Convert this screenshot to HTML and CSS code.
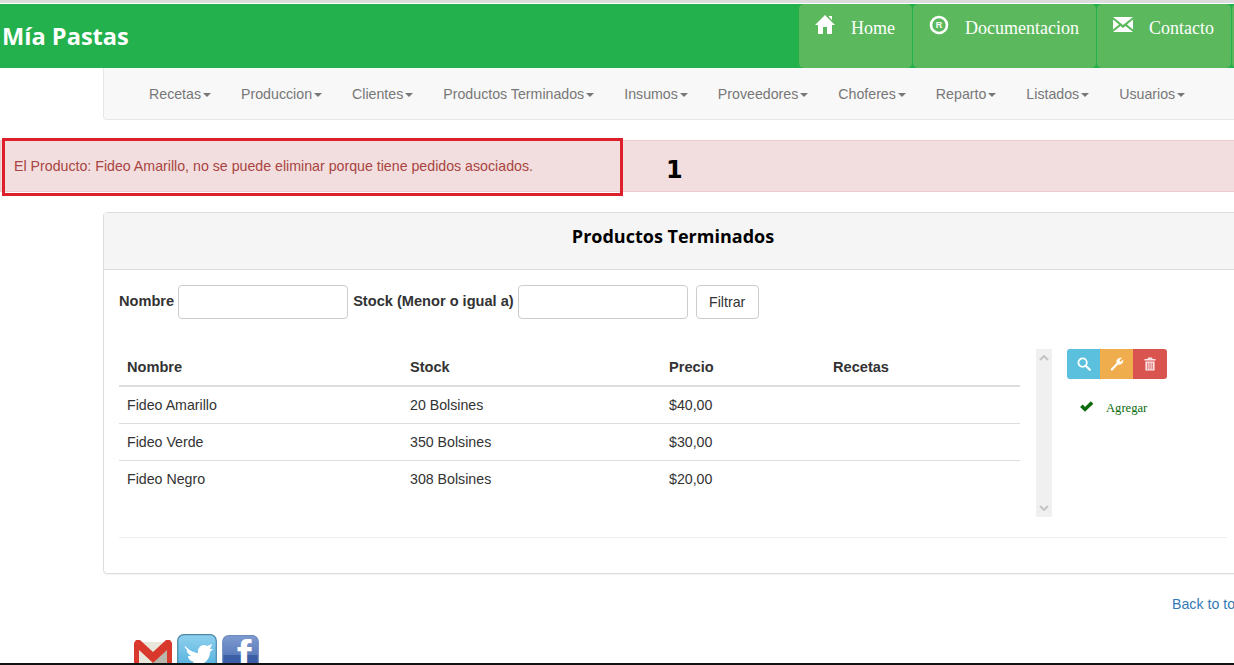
FILE: index.html
```html
<!DOCTYPE html>
<html lang="es">
<head>
    <meta charset="UTF-8">
    <title>Mia Pastas</title>
    <link rel="stylesheet" href="styles.css">
</head>
<body>
<div class="page">
    <header class="top-bar">
        <div class="brand">Mía Pastas</div>
        <nav class="top-links">
            <a class="top-link link-home" href="#">
                <svg class="top-icon" viewBox="0 0 20 20"><path d="M10 0 L20 10 L17 10 L17 19 L12 19 L12 12 L8 12 L8 19 L3 19 L3 10 L0 10 Z M14 1 L17 1 L17 5 L14 2 Z" fill="#fff"/></svg>
                Home
            </a>
            <a class="top-link link-docs" href="#">
                <svg class="top-icon" viewBox="0 0 20 20"><circle cx="10" cy="10" r="8" fill="none" stroke="#fff" stroke-width="2.6"/><text x="10" y="13.4" text-anchor="middle" class="reg-mark">R</text></svg>
                Documentacion
            </a>
            <a class="top-link link-contact" href="#">
                <svg class="top-icon" viewBox="0 0 20 20"><path d="M0 2 L20 2 L10 10 Z M0 4.5 L6 9.5 L0 14.5 Z M20 4.5 L14 9.5 L20 14.5 Z M0 17 L7.5 11 L10 13 L12.5 11 L20 17 Z" fill="#fff"/></svg>
                Contacto
            </a>
            <a class="top-link link-more" href="#"></a>
        </nav>
    </header>

    <nav class="menu">
        <a href="#">Recetas<span class="caret"></span></a>
        <a href="#">Produccion<span class="caret"></span></a>
        <a href="#">Clientes<span class="caret"></span></a>
        <a href="#">Productos Terminados<span class="caret"></span></a>
        <a href="#">Insumos<span class="caret"></span></a>
        <a href="#">Proveedores<span class="caret"></span></a>
        <a href="#">Choferes<span class="caret"></span></a>
        <a href="#">Reparto<span class="caret"></span></a>
        <a href="#">Listados<span class="caret"></span></a>
        <a href="#">Usuarios<span class="caret"></span></a>
    </nav>

    <div class="alert">
        <span class="alert-text">El Producto: Fideo Amarillo, no se puede eliminar porque tiene pedidos asociados.</span>
        <span class="alert-count">1</span>
        <div class="alert-mark"></div>
    </div>

    <section class="panel">
        <h2 class="panel-title">Productos Terminados</h2>
        <div class="panel-body">
            <form class="filter">
                <label>Nombre</label>
                <input type="text" class="field">
                <label class="label-stock">Stock (Menor o igual a)</label>
                <input type="text" class="field">
                <button type="button" class="btn-filter">Filtrar</button>
            </form>

            <div class="listing">
                <table class="products">
                    <thead>
                        <tr>
                            <th class="col-name">Nombre</th>
                            <th class="col-stock">Stock</th>
                            <th class="col-price">Precio</th>
                            <th>Recetas</th>
                        </tr>
                    </thead>
                    <tbody>
                        <tr><td>Fideo Amarillo</td><td>20 Bolsines</td><td>$40,00</td><td></td></tr>
                        <tr><td>Fideo Verde</td><td>350 Bolsines</td><td>$30,00</td><td></td></tr>
                        <tr><td>Fideo Negro</td><td>308 Bolsines</td><td>$20,00</td><td></td></tr>
                    </tbody>
                </table>

                <div class="scrollbar">
                    <svg viewBox="0 0 10 6" class="arrow"><path d="M1 5 L5 1 L9 5" fill="none" stroke="#c4c4c4" stroke-width="2"/></svg>
                    <svg viewBox="0 0 10 6" class="arrow"><path d="M1 1 L5 5 L9 1" fill="none" stroke="#c4c4c4" stroke-width="2"/></svg>
                </div>

                <div class="actions">
                    <div class="btn-group">
                        <a class="btn-icon btn-info" href="#">
                            <svg viewBox="0 0 14 14"><circle cx="5.6" cy="5.6" r="4.2" fill="none" stroke="#fff" stroke-width="1.8"/><path d="M8.8 8.8 L12.8 12.8" stroke="#fff" stroke-width="2.2" stroke-linecap="round"/></svg>
                        </a>
                        <a class="btn-icon btn-warning" href="#">
                            <svg viewBox="0 0 14 14"><path d="M.8 12 L6.6 6 C5.8 2.8 8.4 .2 12 .8 L9.4 3.4 L10.6 5 L13.2 2.6 C13.8 6 11 8.4 8 7.6 L2.4 13.6 C1.6 14 .4 13 .8 12 Z" fill="#fff"/></svg>
                        </a>
                        <a class="btn-icon btn-danger" href="#">
                            <svg viewBox="0 0 14 14"><path d="M5 .6 H9 L9.6 2 H12.6 V3.4 H1.4 V2 H4.4 Z M2.4 4.4 H11.6 V13.6 H2.4 Z" fill="#fbe3e6"/><path d="M4.8 5.8 V12.4 M7 5.8 V12.4 M9.2 5.8 V12.4" stroke="#d9534f" stroke-width=".9"/></svg>
                        </a>
                    </div>
                    <a class="add-link" href="#">
                        <svg viewBox="0 0 14 12"><path d="M1 6.5 L3.4 4.2 L5.6 6.4 L11 1 L13.4 3.4 L5.6 11 Z" fill="#0b6b0b"/></svg>
                        Agregar
                    </a>
                </div>
            </div>
            <hr class="rule">
        </div>
    </section>

    <a class="back-top" href="#">Back to top</a>

    <div class="social">
        <svg class="social-icon icon-gmail" viewBox="0 0 38 40">
            <path d="M1 2 H37 V40 H1 Z" fill="#e9e6dc"/>
            <path d="M19 22 L37 40 V6 Z" fill="#b9b7ad"/>
            <path d="M0 3 L2 0 L6 0 L19 12 L32 0 L36 0 L38 3 V40 H33 V10 L19 23 L5 10 V40 H0 Z" fill="#d9392c"/>
        </svg>
        <svg class="social-icon icon-twitter" viewBox="0 0 40 40">
            <defs>
                <linearGradient id="tw-fill" x1="0" y1="0" x2="0" y2="1">
                    <stop offset="0" stop-color="#8fd0ee"/>
                    <stop offset="1" stop-color="#3fa6d8"/>
                </linearGradient>
                <linearGradient id="fb-fill" x1="0" y1="0" x2="0" y2="1">
                    <stop offset="0" stop-color="#7f9bd0"/>
                    <stop offset=".42" stop-color="#5c7dbc"/>
                    <stop offset=".44" stop-color="#3b5ea6"/>
                    <stop offset="1" stop-color="#3b5ea6"/>
                </linearGradient>
            </defs>
            <rect x=".7" y=".7" width="38.6" height="45" rx="6" fill="url(#tw-fill)" stroke="#4b88a8" stroke-width="1.2"/>
            <path d="M8 12 C13 17 18 19 21 19 C20 14 25 9 30 12 L35 10 L33 15 L36 15 L33 18 C33 28 24 34 7 31 C12 31 15 30 17 28 C13 27 11 25 11 22 L14 22 C11 20 9 17 10 15 L12 16 C9 15 7 14 8 12 Z" fill="#fff"/>
        </svg>
        <svg class="social-icon icon-facebook" viewBox="0 0 37 40">
            <rect x=".7" y=".7" width="35.6" height="45" rx="6" fill="url(#fb-fill)" stroke="#6f8cc0" stroke-width="1.2"/>
            <text x="22" y="36" text-anchor="middle" class="fb-mark">f</text>
        </svg>
    </div>
</div>
</body>
</html>
```

FILE: styles.css
```css
body {
    margin: 0;
    font-family: "Liberation Sans", Arial, sans-serif;
    font-size: 14.2px;
    color: #333;
    background-color: #fff;
}

a {
    text-decoration: none;
}

.page {
    position: relative;
    width: 1234px;
    height: 665px;
    box-sizing: border-box;
    padding-top: 4px;
    overflow: hidden;
    border-bottom: 2px solid #111;
    background: linear-gradient(#dcdcdc, #dcdcdc) top / 100% 3px no-repeat #fff;
}

/* top green bar */
.top-bar {
    display: flex;
    justify-content: space-between;
    height: 64px;
    background-color: #22b14c;
}
.brand {
    padding: 16px 0 0 2px;
    font-family: "Open Sans", sans-serif;
    font-size: 23.6px;
    line-height: 32px;
    font-weight: 700;
    color: #fff;
}
.top-links {
    display: flex;
    gap: 1px;
    margin-right: -40px;
}
.top-link {
    display: block;
    position: relative;
    box-sizing: border-box;
    height: 64px;
    padding-top: 14px;
    border-radius: 5px;
    background-color: #5cb85c;
    font-family: "Liberation Serif", serif;
    font-size: 18px;
    line-height: 20px;
    color: #fff;
}
.link-home { width: 113px; padding-left: 52px; }
.link-docs { width: 183px; padding-left: 52px; }
.link-contact { width: 134px; padding-left: 52px; }
.link-more { width: 42px; }
.top-icon {
    position: absolute;
    left: 16px;
    top: 11px;
    width: 20px;
    height: 20px;
}
.reg-mark {
    font-family: "Liberation Sans", sans-serif;
    font-size: 9px;
    font-weight: 700;
    fill: #fff;
}

/* menu under the bar */
.menu {
    display: flex;
    width: 1160px;
    box-sizing: border-box;
    height: 52px;
    margin-left: 103px;
    padding-left: 30px;
    background-color: #f8f8f8;
    border: 1px solid #e7e7e7;
    border-top: 0;
    border-radius: 0 0 4px 4px;
}
.menu a {
    padding: 0 15px;
    line-height: 53px;
    color: #777;
}
.caret {
    display: inline-block;
    margin-left: 2px;
    vertical-align: middle;
    border-top: 4px solid #777;
    border-left: 4px solid transparent;
    border-right: 4px solid transparent;
}

/* alert */
.alert {
    position: relative;
    width: 1250px;
    height: 52px;
    box-sizing: border-box;
    margin-top: 20px;
    background-color: #f2dede;
    border: 1px solid #ebccd1;
    color: #a94442;
}
.alert-text {
    position: absolute;
    left: 13px;
    top: 17px;
    font-size: 14.2px;
}
.alert-count {
    position: absolute;
    left: 665px;
    top: 15px;
    font-family: "DejaVu Sans", sans-serif;
    font-size: 24px;
    font-weight: 700;
    color: #000;
}
.alert-mark {
    position: absolute;
    left: 1px;
    top: -3px;
    width: 621px;
    height: 58px;
    box-sizing: border-box;
    border: 3px solid #dc1f2a;
}

/* products panel */
.panel {
    width: 1140px;
    box-sizing: border-box;
    margin: 20px 0 0 103px;
    background-color: #fff;
    border: 1px solid #ddd;
    border-radius: 4px;
    box-shadow: 0 1px 1px rgba(0, 0, 0, .05);
}
.panel-title {
    margin: 0;
    height: 57px;
    box-sizing: border-box;
    padding-top: 11px;
    background-color: #f5f5f5;
    border-bottom: 1px solid #ddd;
    font-family: "Open Sans", sans-serif;
    font-size: 18px;
    line-height: 24px;
    font-weight: 700;
    text-align: center;
    color: #000;
}
.panel-body {
    padding: 15px 15px 35px;
}
.filter {
    display: flex;
    align-items: center;
    height: 34px;
}
.filter label {
    position: relative;
    top: -1px;
    font-size: 14.6px;
    font-weight: 700;
    margin-right: 4px;
}
.filter .label-stock {
    margin-left: 5px;
}
.field {
    width: 170px;
    height: 34px;
    box-sizing: border-box;
    background-color: #fff;
    border: 1px solid #ccc;
    border-radius: 4px;
}
.btn-filter {
    width: 63px;
    height: 34px;
    margin-left: 8px;
    background-color: #fff;
    border: 1px solid #ccc;
    border-radius: 4px;
    font-family: inherit;
    font-size: 14.2px;
    color: #333;
}

.listing {
    display: flex;
    align-items: flex-start;
    margin-top: 30px;
}
.products {
    width: 901px;
    border-collapse: collapse;
    table-layout: fixed;
}
.products th {
    height: 37px;
    box-sizing: border-box;
    padding: 0 8px;
    text-align: left;
    font-size: 14.6px;
    line-height: 36px;
    border-bottom: 2px solid #ddd;
}
.products td {
    height: 37px;
    box-sizing: border-box;
    padding: 0 8px;
    border-top: 1px solid #ddd;
}
.products tbody tr:first-child td {
    border-top: 0;
}
.col-name { width: 283px; }
.col-stock { width: 259px; }
.col-price { width: 164px; }

.scrollbar {
    display: flex;
    flex-direction: column;
    justify-content: space-between;
    align-items: center;
    width: 16px;
    height: 168px;
    box-sizing: border-box;
    padding: 6px 0;
    margin-left: 16px;
    background-color: #f0f0f0;
}
.arrow {
    width: 10px;
    height: 6px;
}

.actions {
    margin-left: 15px;
}
.btn-group {
    display: flex;
    width: 100px;
    height: 30px;
    border-radius: 3px;
    overflow: hidden;
}
.btn-icon {
    display: flex;
    align-items: center;
    justify-content: center;
    width: 33px;
}
.btn-icon:last-child {
    width: 34px;
}
.btn-icon svg {
    width: 14px;
    height: 14px;
}
.btn-info { background-color: #5bc0de; }
.btn-warning { background-color: #f0ad4e; }
.btn-danger { background-color: #d9534f; }
.add-link {
    position: relative;
    display: block;
    margin-top: 21px;
    padding-left: 39px;
    font-family: "Liberation Serif", serif;
    font-size: 12.6px;
    line-height: 16px;
    color: #0b6b0b;
}
.add-link svg {
    position: absolute;
    left: 12px;
    top: 0;
    width: 15px;
    height: 13px;
}
.rule {
    margin: 20px 0 0;
    border: 0;
    border-top: 1px solid #eee;
}

.back-top {
    display: block;
    margin: 20px 0 0 1172px;
    width: 90px;
    line-height: 20px;
    color: #337ab7;
}

.social {
    display: flex;
    align-items: flex-start;
    margin: 20px 0 0 134px;
}
.social-icon {
    flex: none;
    height: 40px;
    overflow: hidden;
}
.icon-gmail { width: 38px; margin-top: 6px; }
.icon-twitter { width: 40px; margin-left: 5px; }
.icon-facebook { width: 37px; margin: 1px 0 0 5px; }
.fb-mark {
    font-family: "Liberation Sans", sans-serif;
    font-size: 44px;
    font-weight: 700;
    fill: #fff;
}
```
